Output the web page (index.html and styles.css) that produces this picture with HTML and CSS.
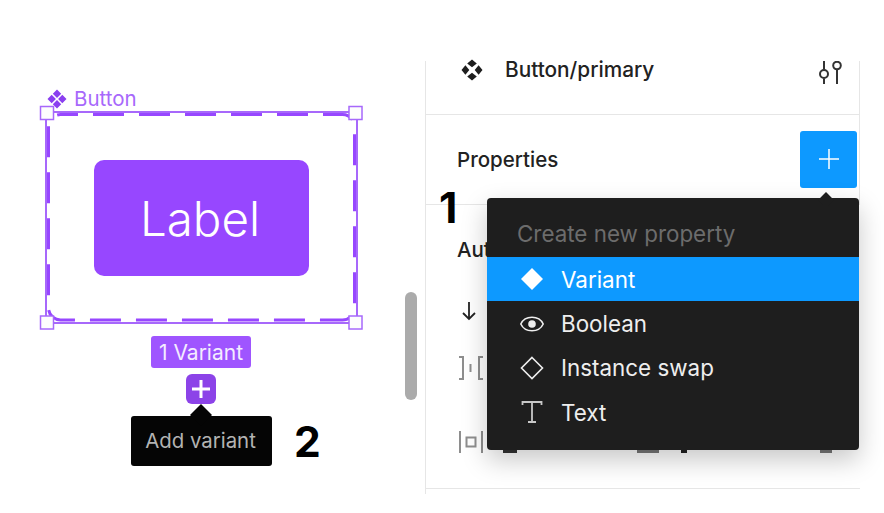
FILE: index.html
```html
<!DOCTYPE html>
<html lang="en">
<head>
<meta charset="utf-8">
<title>Add variant</title>
<link rel="stylesheet" href="styles.css">
</head>
<body>
<div class="page">
  <section class="canvas">
    <div class="comp-name">
      <svg class="comp-icon" width="20" height="20" viewBox="0 0 20 20"><path fill="#8a3ff0" d="M10 .5l4.200 4.200L10 8.900 5.800 4.700zM4.700 5.800L8.900 10l-4.200 4.200L.5 10zM15.300 5.800l4.200 4.200-4.200 4.200L11.100 10zM10 11.100l4.200 4.200L10 19.500l-4.200-4.200z"/></svg>
      <span>Button</span>
    </div>
    <svg class="selection" width="330" height="235" viewBox="0 0 330 235">
      <rect x="10" y="11" width="311" height="211" fill="none" stroke="#a768fb" stroke-width="2"/>
      <rect x="12.500" y="13.500" width="306" height="205.500" rx="12" fill="none" stroke="#9747ff" stroke-width="3" stroke-dasharray="31 15" stroke-dashoffset="13.500"/>
      <g fill="#fdfdfd" stroke="#a768fb" stroke-width="1.500">
        <rect x="4.500" y="5.500" width="13" height="13"/>
        <rect x="313" y="5.500" width="13" height="13"/>
        <rect x="4.500" y="215" width="13" height="13"/>
        <rect x="313" y="215" width="13" height="13"/>
      </g>
    </svg>
    <div class="primary-btn">Label</div>
    <div class="variant-tag">1 Variant</div>
    <div class="add-btn">
      <svg width="22" height="22" viewBox="0 0 22 22"><path stroke="#fff" stroke-width="3" d="M11 2v18M2 11h18"/></svg>
    </div>
    <div class="tooltip">Add variant</div>
    <div class="scrollbar"></div>
    <div class="note note-two">2</div>
  </section>

  <aside class="panel">
    <header class="panel-head">
      <svg class="head-icon" width="22" height="22" viewBox="0 0 22 22"><path fill="#1e1e1e" d="M11 .5l4.800 3.900L11 8.300 6.200 4.400zM4.400 6.200L8.300 11l-3.900 4.800L.5 11zM17.600 6.200l3.900 4.800-3.900 4.800L13.700 11zM11 13.700l4.800 3.900-4.800 3.900-4.800-3.900z"/></svg>
      <span class="head-title">Button/primary</span>
      <svg class="head-tune" width="26" height="24" viewBox="0 0 26 24"><g fill="none" stroke="#333" stroke-width="2"><path d="M7 0v8.500M7 17.500V23M20 8v15"/><circle cx="7" cy="13" r="4"/><circle cx="20" cy="4.500" r="3.800"/></g></svg>
    </header>
    <div class="props-row">
      <span class="section-title">Properties</span>
      <div class="props-add">
        <svg width="24" height="24" viewBox="0 0 24 24"><path stroke="#fff" stroke-width="1.500" d="M12 2v20M2 12h20"/></svg>
      </div>
    </div>
    <div class="auto-section">
      <div class="section-title auto-title">Aut</div>
      <svg class="arrow-icon" width="16" height="20" viewBox="0 0 16 20"><path fill="none" stroke="#222" stroke-width="1.800" d="M8 1v17M2 12l6 6 6-6"/></svg>
      <svg class="gap-icon" width="26" height="26" viewBox="0 0 26 26"><path fill="none" stroke="#8e8e8e" stroke-width="2" d="M1 2h4v22H1M25 2h-4v22h4M12.500 9v8"/></svg>
      <div class="pad-row">
        <svg width="24" height="22" viewBox="0 0 24 22"><path fill="none" stroke="#8e8e8e" stroke-width="2" d="M1 0v22M23 0v22M7.500 6.500h9v9h-9z"/></svg>
        <span class="frag frag-d"></span><span class="frag frag-a"></span><span class="frag frag-b"></span><span class="frag frag-c"></span>
      </div>
    </div>
  </aside>

  <div class="menu">
    <div class="menu-title">Create new property</div>
    <div class="menu-item is-active">
      <svg width="24" height="24" viewBox="0 0 24 24"><path fill="#fff" d="M12 1l11 11-11 11L1 12z"/></svg>
      <span>Variant</span>
    </div>
    <div class="menu-item">
      <svg width="24" height="24" viewBox="0 0 24 24"><path fill="none" stroke="#eee" stroke-width="1.600" d="M.8 12C5 3 19 3 23.200 12 19 21 5 21 .8 12z"/><circle cx="12" cy="12" r="3.800" fill="#eee"/></svg>
      <span>Boolean</span>
    </div>
    <div class="menu-item">
      <svg width="24" height="24" viewBox="0 0 24 24"><path fill="none" stroke="#eee" stroke-width="1.600" d="M12 1.500L22.500 12 12 22.500 1.500 12z"/></svg>
      <span>Instance swap</span>
    </div>
    <div class="menu-item">
      <svg width="24" height="24" viewBox="0 0 24 24"><path fill="none" stroke="#c8c8c8" stroke-width="1.800" d="M2.500 5V2h19v3M12 2v20M8 22h8"/></svg>
      <span>Text</span>
    </div>
  </div>
  <div class="note note-one">1</div>
</div>
</body>
</html>
```
FILE: styles.css
```css
* { box-sizing: border-box; }
html, body { margin: 0; background: #fff; }
body { font-family: Inter, "Noto Sans", sans-serif; }

.page {
  position: relative;
  display: flex;
  width: 884px;
  height: 513px;
  overflow: hidden;
}

/* free canvas */
.canvas { position: relative; width: 425px; flex: none; }
.comp-name {
  position: absolute;
  left: 47px;
  top: 87px;
  display: flex;
  align-items: center;
  gap: 7px;
  color: #a768fb;
  font-size: 20.500px;
  line-height: 23px;
}
.comp-icon { flex: none; }
.selection { position: absolute; left: 36px; top: 101px; }
.primary-btn {
  position: absolute;
  left: 94px;
  top: 160px;
  width: 215px;
  height: 116px;
  padding-right: 3px;
  display: flex;
  align-items: center;
  justify-content: center;
  border-radius: 10px;
  background: #9747ff;
  color: #fff;
  font-size: 47.500px;
  font-weight: 300;
}
.variant-tag {
  position: absolute;
  left: 151px;
  top: 336px;
  width: 100px;
  height: 32px;
  display: flex;
  align-items: center;
  justify-content: center;
  border-radius: 3px;
  background: #9f55ff;
  color: #f4ecff;
  font-size: 21px;
}
.add-btn {
  position: absolute;
  left: 186px;
  top: 374px;
  width: 30px;
  height: 30px;
  display: flex;
  align-items: center;
  justify-content: center;
  border-radius: 6px;
  background: #8c43e8;
}
.tooltip {
  position: absolute;
  left: 131px;
  top: 416px;
  width: 141px;
  height: 50px;
  padding-right: 2px;
  padding-bottom: 2px;
  display: flex;
  align-items: center;
  justify-content: center;
  border-radius: 3px;
  background: #050505;
  color: #b3b3b3;
  font-size: 20.400px;
}
.tooltip::before {
  content: "";
  position: absolute;
  left: 60px;
  top: -11px;
  width: 20px;
  height: 20px;
  background: #050505;
  transform: rotate(45deg) scale(0.78);
}
.scrollbar {
  position: absolute;
  left: 405px;
  top: 292px;
  width: 12px;
  height: 108px;
  border-radius: 6px;
  background: #ababab;
}
.note {
  position: absolute;
  color: #000;
  font-family: Inter, "Liberation Sans", sans-serif;
  font-weight: 700;
  font-size: 42.500px;
  line-height: 50px;
}
.note-two { left: 294px; top: 417px; }
.note-one { left: 439px; top: 183px; }

/* inspector panel */
.panel {
  width: 435px;
  height: 433px;
  margin-top: 61px;
  flex: none;
  border-left: 1.500px solid #e6e6e6;
  color: #222;
  display: flex;
  flex-direction: column;
}
.panel-head {
  height: 54px;
  flex: none;
  display: flex;
  align-items: flex-start;
  border-bottom: 1.500px solid #e6e6e6;
  border-right: 1.500px solid #e6e6e6;
  padding-left: 35px;
  padding-right: 16px;
}
.head-icon { flex: none; margin-top: -2px; }
.head-title {
  margin-left: 22px;
  flex: 1;
  font-size: 20.800px;
  font-weight: 500;
  line-height: 18px;
  color: #222;
}
.head-tune { flex: none; margin-top: 0; }
.props-row {
  height: 90px;
  flex: none;
  display: flex;
  align-items: center;
  justify-content: space-between;
  padding-left: 31px;
  border-bottom: 1.500px solid #e6e6e6;
  border-right: 1.500px solid #e6e6e6;
}
.section-title {
  font-size: 20.500px;
  font-weight: 500;
  color: #222;
}
.props-add {
  width: 57px;
  height: 57px;
  display: flex;
  align-items: center;
  justify-content: center;
  border-radius: 3px;
  background: #0d99ff;
  margin-top: -1px;
  margin-right: 2px;
}
.auto-section {
  height: 284px;
  flex: none;
  display: flex;
  flex-direction: column;
  align-items: flex-start;
  padding: 34px 0 0 35px;
  border-bottom: 1.500px solid #e6e6e6;
}
.auto-title { margin-left: -4px; line-height: 22px; white-space: nowrap; }
.arrow-icon { margin-top: 40px; }
.gap-icon { margin-top: 34px; margin-left: -3px; }
.pad-row {
  position: relative;
  margin-top: 50px;
  margin-left: -2px;
  height: 22px;
  width: 390px;
}
.frag { position: absolute; background: #777; }
.frag-d { left: 44px; top: 19px; width: 14px; height: 3px; background: #333; }
.frag-a { left: 178px; top: 19px; width: 22px; height: 3px; }
.frag-b { left: 222px; top: 19px; width: 6px; height: 3px; background: #222; }
.frag-c { left: 361px; top: 19px; width: 12px; height: 3px; }

/* overlay menu */
.menu {
  position: absolute;
  left: 487px;
  top: 198px;
  width: 372px;
  height: 252px;
  padding-top: 14px;
  border-radius: 4px;
  background: #1e1e1e;
  box-shadow: 0 10px 26px rgba(0, 0, 0, 0.22);
}
.menu::before {
  content: "";
  position: absolute;
  left: 331px;
  top: -6px;
  width: 16px;
  height: 16px;
  background: #1e1e1e;
  transform: rotate(45deg) scale(0.7);
}
.menu-title {
  height: 45px;
  padding-left: 30px;
  color: #6c6c6c;
  font-size: 22.400px;
  line-height: 44px;
}
.menu-item {
  height: 44.400px;
  display: flex;
  align-items: center;
  gap: 17px;
  padding-left: 33px;
  color: #eee;
  font-size: 22.400px;
}
.menu-item svg { flex: none; width: 24px; }
.menu-item.is-active { background: #0d99ff; color: #fff; }
```
